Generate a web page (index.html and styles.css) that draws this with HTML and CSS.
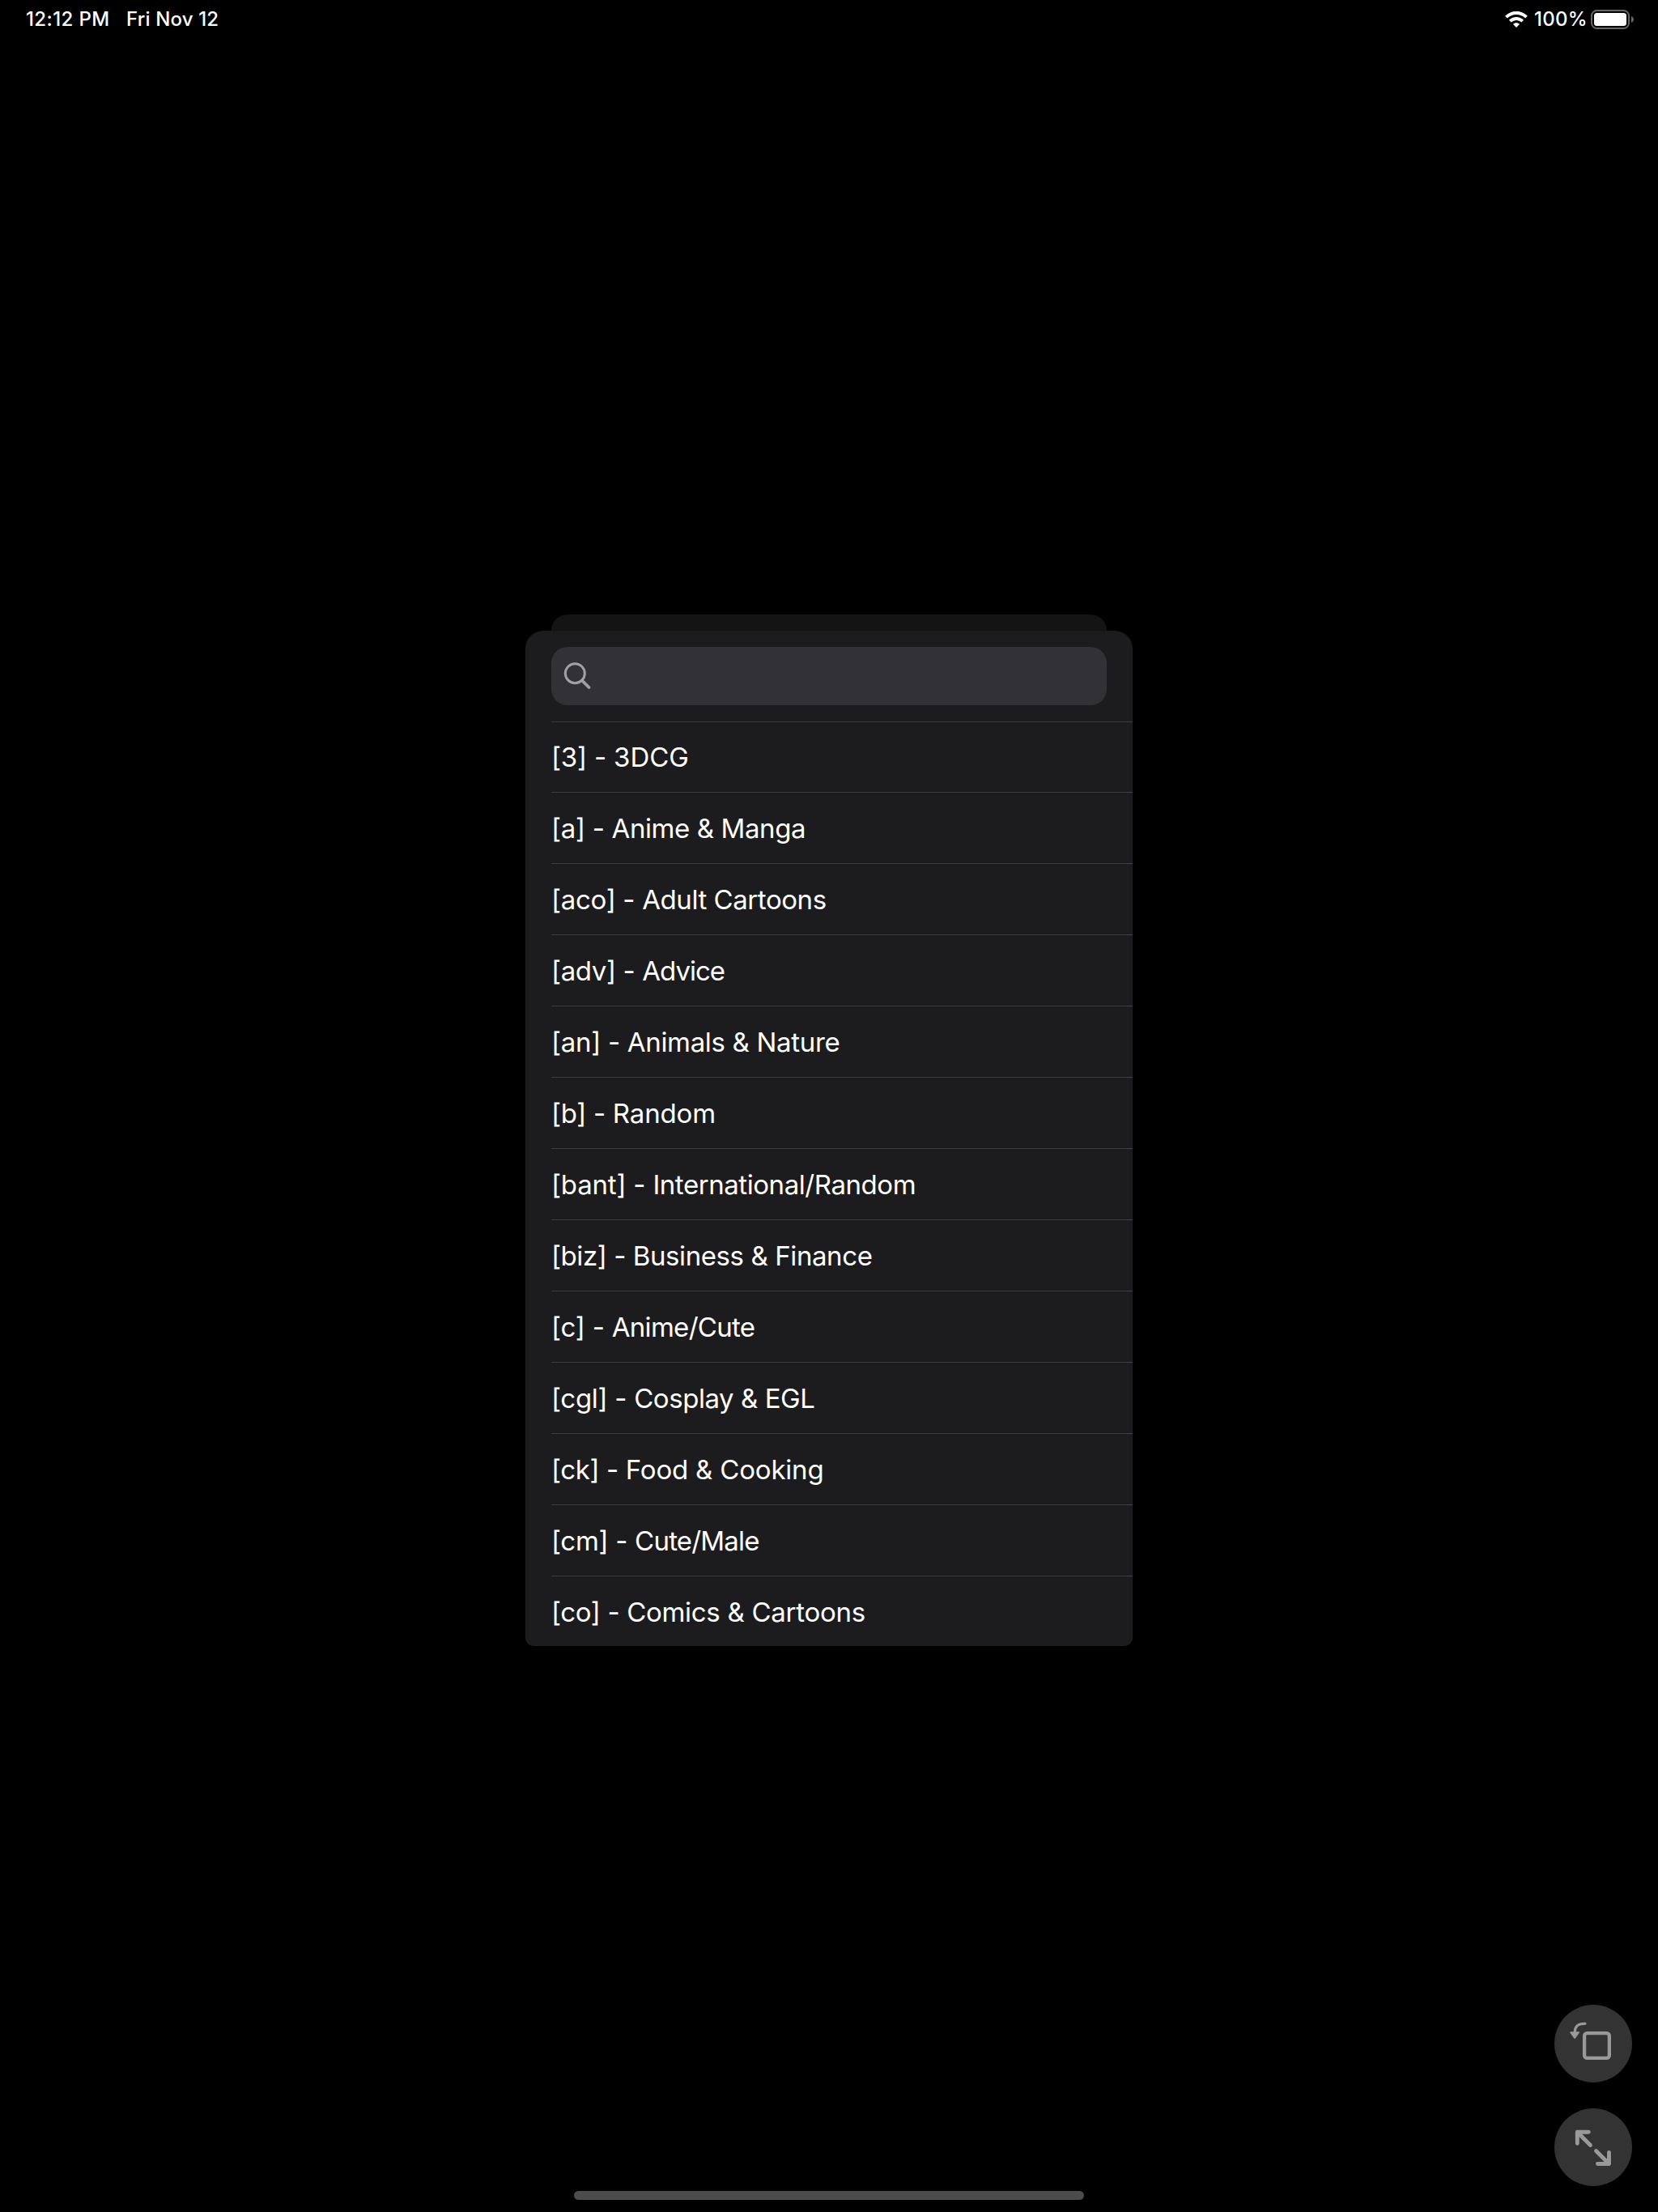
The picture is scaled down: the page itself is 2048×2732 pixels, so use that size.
FILE: index.html
```html
<!DOCTYPE html>
<html lang="en">
<head>
<meta charset="utf-8">
<title>Boards</title>
<link rel="stylesheet" href="styles.css">
</head>
<body>
<div class="screen">
  <header class="status">
    <span class="time">12:12 PM</span>
    <span class="date">Fri Nov 12</span>
    <svg class="wifi" width="28" height="20" viewBox="0 0 28 20" fill="none" stroke="#fff" stroke-width="3.9">
      <path d="M1.500 7.200C8.500 .300 19.500 .300 26.500 7.200"/>
      <path d="M6.300 12.200C10.600 7.900 17.400 7.900 21.700 12.200"/>
      <path d="M14 19.900L9.900 15.800C12.200 13.600 15.800 13.600 18.100 15.800Z" fill="#fff" stroke="none"/>
    </svg>
    <span class="level">100%</span>
    <svg class="battery" width="54" height="24" viewBox="0 0 54 24">
      <rect x="1" y="1" width="46" height="22" rx="6.500" fill="none" stroke="#666" stroke-width="2"/>
      <rect x="4" y="4" width="40" height="16" rx="3.500" fill="#fff"/>
      <path d="M50 8C54 9.500 54 14.500 50 16Z" fill="#666"/>
    </svg>
  </header>

  <main class="picker">
    <div class="sheet-behind"></div>
    <section class="sheet">
      <div class="search">
        <svg width="36" height="36" viewBox="0 0 36 36" fill="none" stroke="#a0a0a7">
          <circle cx="15.300" cy="14.700" r="12" stroke-width="3"/>
          <path d="M24 23.500L32.500 32" stroke-width="3.800" stroke-linecap="round"/>
        </svg>
      </div>
      <ul class="boards">
        <li class="board b-3"><span class="code">[3] - </span><span class="name">3DCG</span></li>
        <li class="board b-a"><span class="code">[a] - </span><span class="name">Anime &amp; Manga</span></li>
        <li class="board b-aco"><span class="code">[aco] - </span><span class="name">Adult Cartoons</span></li>
        <li class="board b-adv"><span class="code">[adv] - </span><span class="name">Advice</span></li>
        <li class="board b-an"><span class="code">[an] - </span><span class="name">Animals &amp; Nature</span></li>
        <li class="board b-b"><span class="code">[b] - </span><span class="name">Random</span></li>
        <li class="board b-bant"><span class="code">[bant] - </span><span class="name">International/Random</span></li>
        <li class="board b-biz"><span class="code">[biz] - </span><span class="name">Business &amp; Finance</span></li>
        <li class="board b-c"><span class="code">[c] - </span><span class="name">Anime/Cute</span></li>
        <li class="board b-cgl"><span class="code">[cgl] - </span><span class="name">Cosplay &amp; EGL</span></li>
        <li class="board b-ck"><span class="code">[ck] - </span><span class="name">Food &amp; Cooking</span></li>
        <li class="board b-cm"><span class="code">[cm] - </span><span class="name">Cute/Male</span></li>
        <li class="board b-co"><span class="code">[co] - </span><span class="name">Comics &amp; Cartoons</span></li>
      </ul>
    </section>
  </main>

  <div class="controls">
    <svg class="control" viewBox="0 0 96 96" fill="none" stroke="#999">
      <rect x="37.100" y="35.100" width="30.800" height="30.800" rx="3.500" stroke-width="4.300"/>
      <path d="M38 23.300C29 23 25.300 27 25.300 34" stroke-width="3.200" stroke-linecap="round"/>
      <path d="M20.200 34.200H30L25.100 41Z" fill="#999" stroke-width="2" stroke-linejoin="round"/>
    </svg>
    <svg class="control" viewBox="0 0 96 96" fill="none" stroke="#999" stroke-width="4.900" stroke-linecap="round" stroke-linejoin="round">
      <path d="M44.500 45.500L28.500 29.500M28.300 43.200V29.300H42.300"/>
      <path d="M51.500 52.500L67.500 68.500M53.500 68.500H67.500V54.500"/>
    </svg>
  </div>

  <div class="home-indicator"></div>
</div>
</body>
</html>
```

FILE: styles.css
```css
* { box-sizing: border-box; }

body {
  margin: 0;
  background: #000;
  color: #fff;
  font-family: Inter, "Liberation Sans", sans-serif;
}

.screen {
  position: relative;
  width: 2048px;
  height: 2732px;
  overflow: hidden;
  display: flex;
  flex-direction: column;
}

/* Status bar */
.status {
  display: flex;
  align-items: center;
  height: 48px;
  padding: 0 29px 0 32px;
  font-size: 24px;
  font-weight: 500;
  line-height: 48px;
  white-space: nowrap;
}
.time { width: 124px; letter-spacing: .4px; }
.date { letter-spacing: .15px; }
.wifi { margin-left: auto; margin-right: 8px; }
.level { width: 70px; letter-spacing: .3px; }

/* Board picker */
.picker {
  width: 750px;
  margin: 711px auto 0;
}
.sheet-behind {
  height: 20px;
  margin: 0 32px;
  border-radius: 20px 20px 0 0;
  background: #141414;
}
.sheet {
  height: 1254px;
  padding-top: 20px;
  border-radius: 22px 22px 10px 10px;
  background: #1c1c1e;
  overflow: hidden;
}
.search {
  display: flex;
  align-items: center;
  height: 72px;
  margin: 0 32px 20px;
  padding-left: 14px;
  border-radius: 20px;
  background: #323136;
}
.boards {
  margin: 0 0 0 32px;
  padding: 0;
  list-style: none;
}
.board {
  height: 88px;
  border-top: 1px solid #3d3d41;
  font-size: 33px;
  line-height: 88px;
  white-space: pre;
}
.board:first-child { height: 87px; line-height: 86px; }
.code { letter-spacing: -.3px; }
.name { letter-spacing: -.4px; }

.b-3 .name { letter-spacing: 0; }
.b-aco .name, .b-bant .name, .b-cgl .name { letter-spacing: -.44px; }
.b-adv .name { letter-spacing: -1px; }
.b-an .name { letter-spacing: -.32px; }
.b-b .name { letter-spacing: -.16px; }
.b-c .name { letter-spacing: -.7px; }
.b-ck .name { letter-spacing: -.19px; }
.b-cm .name { letter-spacing: -.8px; }
.b-co .name { letter-spacing: -.28px; }
.b-3 .code, .b-bant .code, .b-c .code { letter-spacing: -.2px; }
.b-adv .code, .b-ck .code, .b-co .code { letter-spacing: -.37px; }
.b-biz .code { letter-spacing: -.44px; }

/* Floating controls */
.controls {
  position: absolute;
  right: 32px;
  bottom: 32px;
  display: flex;
  flex-direction: column;
  gap: 32px;
}
.control {
  width: 96px;
  height: 96px;
  border-radius: 50%;
  background: #333;
}

.home-indicator {
  width: 630px;
  height: 11px;
  margin: auto auto 15px;
  border-radius: 6px;
  background: #4c4c4c;
}
```
